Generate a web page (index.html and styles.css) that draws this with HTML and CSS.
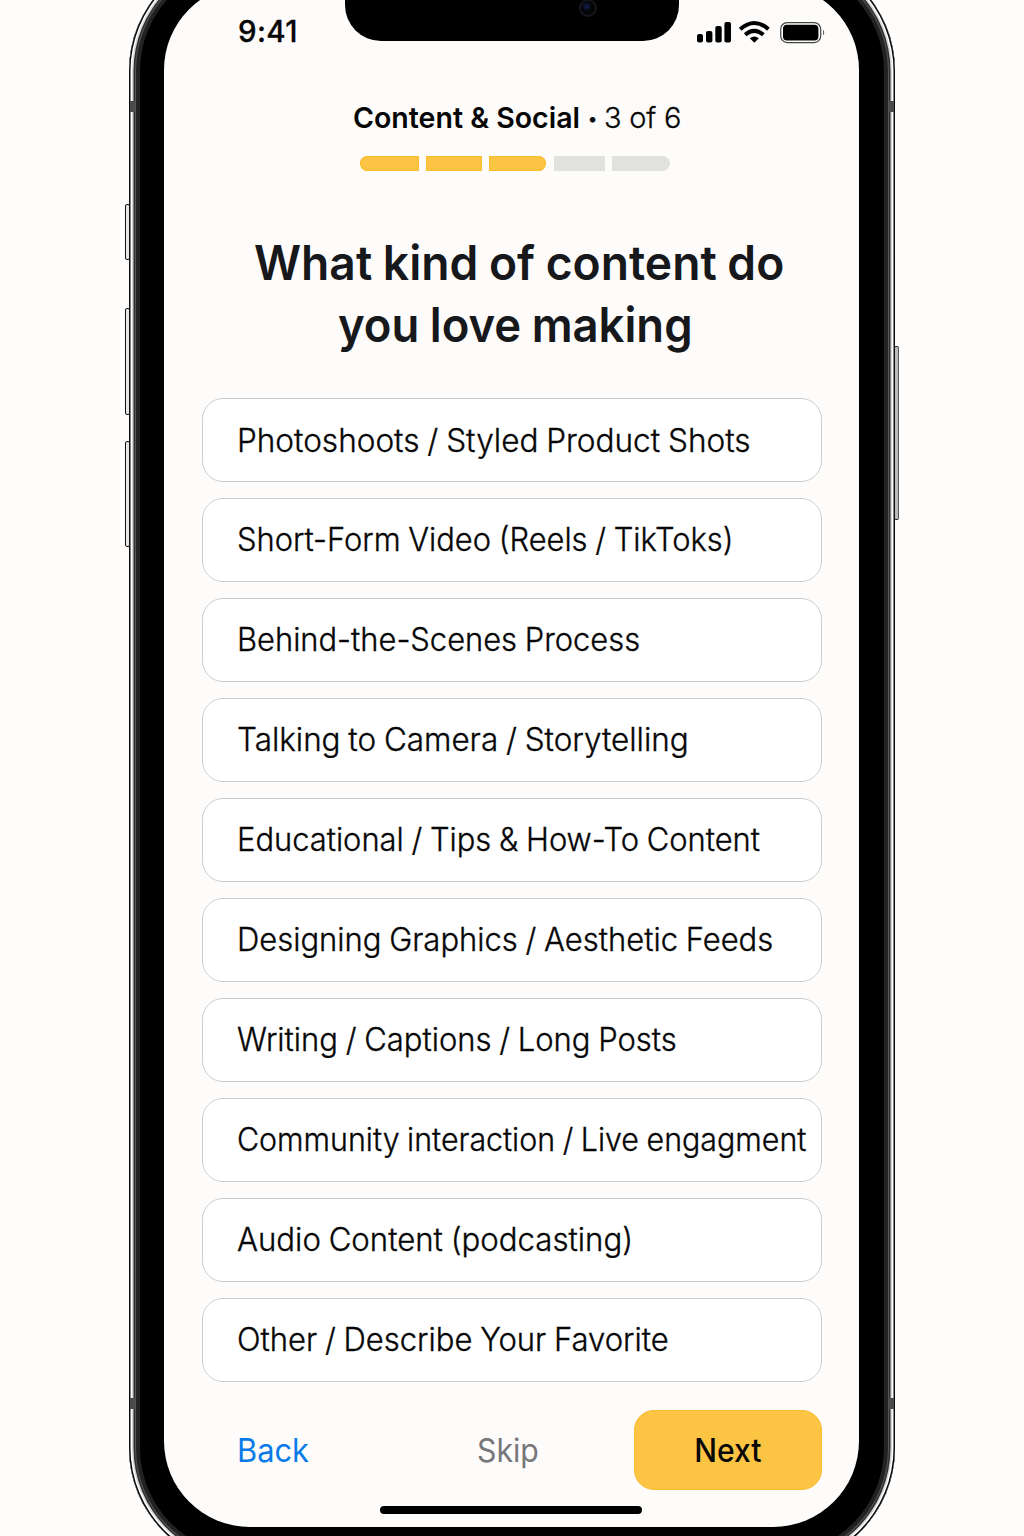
FILE: index.html
```
<!DOCTYPE html>
<html lang="en">
<head>
<meta charset="utf-8">
<title>Content &amp; Social</title>
<link rel="stylesheet" href="styles.css">
</head>
<body>
<div class="phone">
  <i class="key key-mute"></i><i class="key key-up"></i><i class="key key-down"></i><i class="key key-power"></i>
  <i class="band band-tl"></i><i class="band band-tr"></i><i class="band band-bl"></i><i class="band band-br"></i>
  <main class="screen">
    <div class="notch"><i class="lens"></i></div>
    <header class="status">
      <span class="time">9:41</span>
      <svg class="status-icons" width="130" height="24" viewBox="0 0 130 24">
        <rect x="1" y="14" width="6" height="8.4" rx="2"/><rect x="10" y="11" width="6.4" height="11.4" rx="2"/><rect x="19.3" y="6" width="6.4" height="16.4" rx="2"/><rect x="28.4" y="2" width="6.6" height="20.4" rx="2"/>
        <g fill="none" stroke="#000" stroke-width="4"><path d="M44.2 9.2Q58.3 -3.2 72.4 9.2"/><path d="M49.2 14.8Q58.3 7 67.4 14.8"/></g>
        <path d="M53.8 18.2Q58.3 14.8 62.8 18.2L58.3 22.8Z"/>
        <rect x="84.7" y="2.6" width="40" height="20" rx="6.5" fill="none" stroke="#444" stroke-width="1.2"/>
        <rect x="87" y="4.8" width="35.4" height="15.6" rx="4"/>
        <path d="M127 9.5Q129.4 12.5 127 15.5Z" fill="#666"/>
      </svg>
    </header>
    <div class="step"><b class="fit step-name">Content &amp; Social</b><span class="dot">•</span><span class="step-count">3 of 6</span></div>
    <div class="progress"><i class="done"></i><i class="done"></i><i class="done"></i><i></i><i></i></div>
    <h1 class="title"><span class="fit title-a">What kind of content do</span><span class="fit title-b">you love making</span></h1>
    <ul class="options">
      <li><span class="fit">Photoshoots / Styled Product Shots</span></li>
      <li><span class="fit">Short-Form Video (Reels / TikToks)</span></li>
      <li><span class="fit">Behind-the-Scenes Process</span></li>
      <li><span class="fit">Talking to Camera / Storytelling</span></li>
      <li><span class="fit">Educational / Tips &amp; How-To Content</span></li>
      <li><span class="fit">Designing Graphics / Aesthetic Feeds</span></li>
      <li><span class="fit">Writing / Captions / Long Posts</span></li>
      <li><span class="fit">Community interaction / Live engagment</span></li>
      <li><span class="fit">Audio Content (podcasting)</span></li>
      <li><span class="fit">Other / Describe Your Favorite</span></li>
    </ul>
    <footer class="actions"><a class="fit back">Back</a><a class="fit skip">Skip</a><button class="next"><span class="fit">Next</span></button></footer>
    <i class="home"></i>
  </main>
</div>
</body>
</html>
```
FILE: styles.css
```
* { box-sizing: border-box; }
body { margin: 0; height: 1536px; overflow: hidden; background: #fefdfb; font-family: Inter, "Liberation Sans", sans-serif; color: #060606; display: flow-root; }

/* Device frame */
.phone { position: relative; width: 766px; height: 1613px; margin: -47px 0 0 129px; padding: 31px 36px 39px 35px; border-radius: 118px; background: #000;
  box-shadow: inset 0 0 0 1.5px #0b0b0b, inset 0 0 0 3px #fff, inset 0 0 0 4.5px #d5d5d8, inset 0 0 0 6px #303033, inset 0 0 0 7px #555, inset 0 0 0 11px #222224; }
.screen { position: relative; display: flex; flex-direction: column; width: 695px; height: 1543px; border-radius: 86px; background: #fdfcfa; }
.key { position: absolute; left: -4px; width: 5px; border: 1.5px solid #111; border-radius: 2px; background: #e8e8e8; }
.key-mute { top: 251px; height: 56px; }
.key-up { top: 355px; height: 107px; }
.key-down { top: 488px; height: 106px; }
.key-power { left: auto; right: -4px; top: 393px; height: 174px; background: #bbb; border-color: #222 #555 #222 #111; }
.band { position: absolute; left: 1px; width: 5px; height: 11px; background: #4a4a4b; }
.band-tr, .band-br { left: auto; right: 1px; }
.band-tl, .band-tr { top: 148px; }
.band-bl, .band-br { top: 1445px; }
.notch { position: absolute; left: 181px; top: 0; width: 334px; height: 57px; border-radius: 0 0 36px 36px; background: #000; }
.lens { position: absolute; left: 234px; top: 15px; width: 18px; height: 18px; border-radius: 50%; border: 2px solid #17171b; background: radial-gradient(circle at 40% 40%, #101c40 0 10%, #050509 40%); }

/* Condensed text: --fit is the horizontal scale of a label */
.fit { display: inline-block; white-space: nowrap; transform: scaleX(var(--fit, 1)); transform-origin: 0 50%; }

/* Header */
.status { display: flex; justify-content: space-between; align-items: center; margin-top: 32px; height: 32px; padding: 0 33px 0 74px; }
.time { font-size: 29.5px; font-weight: 500; line-height: 32px; letter-spacing: .4px; margin-bottom: 2px; -webkit-text-stroke: .3px currentColor; }
.step { display: flex; margin: 54px 0 0 188.5px; height: 32px; line-height: 32px; font-size: 29px; }
.step-name { --fit: .983; font-weight: 600; width: 234px; }
.dot { width: 17.5px; padding-left: 1px; font-size: 18px; line-height: 34px; }
.step-count { font-weight: 300; letter-spacing: -.2px; -webkit-text-stroke: .3px currentColor; }
.progress { display: grid; grid-template-columns: 59px 56px 57px 51.5px 58px; column-gap: 7.2px; margin: 22px 0 0 196px; height: 15px; }
.progress i { background: #e1e1e0; }
.progress .done { background: #fbc443; box-shadow: inset 0 0 0 1px #f9bd2e; }
.progress i:first-child { border-radius: 8px 0 0 8px; }
.progress i:nth-child(3), .progress i:last-child { border-radius: 0 8px 8px 0; }
.title { display: flex; flex-direction: column; align-items: flex-start; margin: 61px 0 0 90px; font-size: 48px; font-weight: 600; line-height: 62px; color: #17181b; word-spacing: -1px; }
.title-a { --fit: .962; }
.title-b { --fit: .946; margin-left: 84px; }

/* Choices */
.options { display: grid; grid-template: repeat(10, 84px) / minmax(0, 1fr); gap: 16px; list-style: none; margin: 42px 37px 0 38px; padding: 0; }
.options li { display: flex; align-items: center; padding: 0 0 2px 33.5px; border: 1.5px solid #cbced0; border-radius: 21px; background: #fff; font-size: 32px; font-weight: 300; word-spacing: -1px; -webkit-text-stroke: .35px currentColor; }
.options li:nth-child(1) { --fit: .985; padding-bottom: 0; }
.options li:nth-child(2) { --fit: .964; }
.options li:nth-child(3) { --fit: .965; }
.options li:nth-child(4) { --fit: .981; }
.options li:nth-child(5) { --fit: .965; }
.options li:nth-child(6) { --fit: .968; }
.options li:nth-child(7) { --fit: .968; }
.options li:nth-child(8) { --fit: .949; }
.options li:nth-child(9) { --fit: .974; }
.options li:nth-child(10) { --fit: .969; }

/* Footer */
.actions { display: flex; align-items: center; margin: 28px 37px 0 72.5px; height: 80px; font-size: 32px; }
.back { --fit: .962; color: #087be8; }
.skip { --fit: .945; color: #777779; margin-left: 165.5px; }
.next { --fit: .94; margin-left: auto; width: 188px; height: 80px; padding: 0; border: 1px solid #f9bd2e; border-radius: 20px; background: #fbc443; font: 500 32px Inter, sans-serif; color: #080808; }
.next .fit { transform-origin: 50% 50%; }
.home { width: 262px; height: 8px; border-radius: 4px; background: #000; margin: 16px 0 0 216px; }
```
